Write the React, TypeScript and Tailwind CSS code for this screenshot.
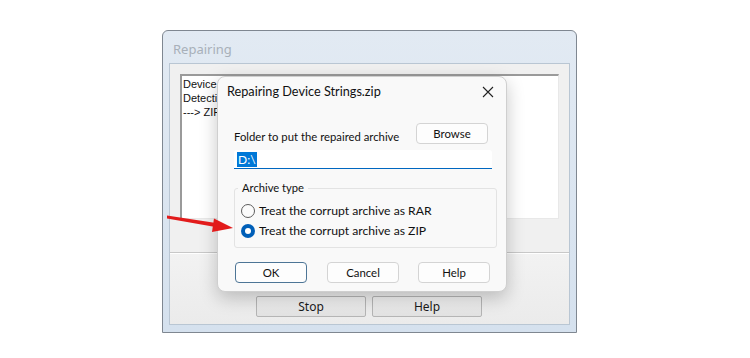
import React from "react";

const noto = { fontFamily: '"Noto Sans", "Open Sans", sans-serif' };
const lato = { fontFamily: 'Lato, "Noto Sans", sans-serif' };

function Radio({ checked, label }: { checked?: boolean; label: string }) {
  return (
    <div className="flex h-[20px] items-center">
      {checked ? (
        <div className="flex h-[14px] w-[14px] items-center justify-center rounded-full bg-[#005fb8]">
          <div className="h-[6px] w-[6px] rounded-full bg-white" />
        </div>
      ) : (
        <div className="h-[14px] w-[14px] rounded-full border border-[#5d5d5d] bg-[#fbfbfb]" />
      )}
      <span className="ml-[4px] whitespace-nowrap text-[12.2px] leading-none text-[#111]">{label}</span>
    </div>
  );
}

function DlgButton({ children, primary }: { children: React.ReactNode; primary?: boolean }) {
  return (
    <div
      className={
        "flex h-[21px] w-[72px] items-center justify-center rounded-[4px] bg-[#fdfdfd] text-[11.4px] text-[#111] " +
        (primary ? "border border-[#4d7596]" : "border border-[#d4d4d4]")
      }
    >
      {children}
    </div>
  );
}

function ClassicButton({ children }: { children: React.ReactNode }) {
  return (
    <div
      className="flex h-[21px] w-[110px] items-center justify-center rounded-[2px] border border-[#b5b5b5] bg-gradient-to-b from-[#f2f2f2] to-[#e2e2e2] text-[12px] text-[#1a1a1a]"
      style={noto}
    >
      {children}
    </div>
  );
}

export default function App() {
  return (
    <div className="relative h-[358px] w-[750px] overflow-hidden bg-white" style={noto}>
      <div className="pl-[162px] pt-[30px]">
        {/* Background window */}
        <div className="flex h-[303px] w-[415px] flex-col rounded-t-[6px] border border-[#7f8791] bg-gradient-to-b from-[#e2eaf3] to-[#d5e1ee]">
          <div className="flex h-[32px] items-center pl-[10px] pt-[5px] text-[13px] text-[#a8b0b9]">Repairing</div>
          <div className="mx-[6px] flex flex-1 flex-col border border-[#b9c6d3] bg-[#f0f0f0]">
            <div
              className="ml-[10px] mr-[10px] mt-[10px] h-[145px] border-l-2 border-t-2 border-b border-r border-l-[#9a9a9a] border-t-[#9a9a9a] border-b-[#e8e8e8] border-r-[#e8e8e8] bg-white pl-[1px] pt-[1px] text-[11px] leading-[14px] text-[#111]"
              style={{ fontFamily: '"Liberation Sans", Arial, sans-serif' }}
            >
              <div className="w-[34px] overflow-hidden whitespace-nowrap">
                <div>Device Strings.zip</div>
                <div>Detecting archive type</div>
                <div>---&gt; ZIP archive</div>
              </div>
            </div>
            <div className="mt-[33px] border-t border-b border-t-[#c8c8c8] border-b-white" />
            <div className="flex flex-1 flex-col bg-gradient-to-b from-[#f2f2f2] to-[#ebebeb]">
              <div className="mt-[42px] flex gap-[6px] pl-[86px]">
                <ClassicButton>Stop</ClassicButton>
                <ClassicButton>Help</ClassicButton>
              </div>
            </div>
          </div>
          <div className="h-[7px]" />
        </div>
      </div>

      {/* Foreground dialog */}
      <div
        className="absolute left-[217px] top-[76px] flex h-[216px] w-[290px] flex-col rounded-[8px] border border-[#cfcfcf] bg-[#f9f9f9] shadow-[0_6px_18px_rgba(0,0,0,0.22)]"
        style={lato}
      >
        <div className="flex h-[30px] items-center justify-between pl-[9px] pr-[12px]">
          <span className="whitespace-nowrap text-[12.7px] text-[#111]">Repairing Device Strings.zip</span>
          <svg width="12" height="12" viewBox="0 0 12 12">
            <path d="M1 1 L11 11 M11 1 L1 11" stroke="#222" strokeWidth="1.1" />
          </svg>
        </div>
        <div className="flex flex-col pl-[16px]">
          <div className="mt-[16px] flex items-end justify-between pr-[18px]">
            <span className="mb-[-2px] whitespace-nowrap text-[11.3px] text-[#111]">Folder to put the repaired archive</span>
            <DlgButton>Browse</DlgButton>
          </div>
          <div className="mt-[6px] flex h-[19px] w-[258px] items-center rounded-t-[3px] border-b-[1.5px] border-b-[#0067c0] bg-white pl-[3px]">
            <span className="bg-[#0078d7] px-[1px] text-[12px] leading-[15px] text-white">D:\</span>
          </div>
          <fieldset className="mt-[11px] w-[263px] rounded-[3px] border border-[#e3e3e3] pb-[6px] pl-[6px]">
            <legend className="ml-[-3px] px-[4px] text-[11.2px] leading-[16px] text-[#111]">Archive type</legend>
            <div className="mt-[5px]">
              <Radio label="Treat the corrupt archive as RAR" />
              <Radio checked label="Treat the corrupt archive as ZIP" />
            </div>
          </fieldset>
          <div className="mt-[14px] flex pl-[1px]">
            <DlgButton primary>OK</DlgButton>
            <div className="ml-[20px]">
              <DlgButton>Cancel</DlgButton>
            </div>
            <div className="ml-[19px]">
              <DlgButton>Help</DlgButton>
            </div>
          </div>
        </div>
      </div>

      {/* Red arrow */}
      <svg className="absolute left-0 top-0" width="750" height="358" viewBox="0 0 750 358">
        <path d="M167 215.5 L216 223 L215.5 227 L167 218.5 Z" fill="#e21b1b" />
        <polygon points="214,218.5 233,228 212,232" fill="#e21b1b" />
      </svg>
    </div>
  );
}
